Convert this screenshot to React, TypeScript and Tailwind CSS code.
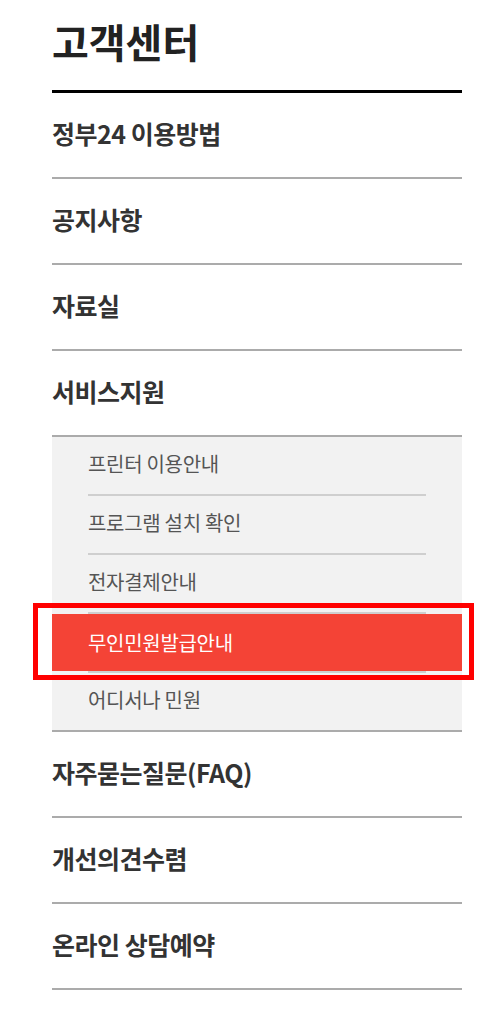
const menu = [
  { label: '정부24 이용방법' },
  { label: '공지사항' },
  { label: '자료실' },
  {
    label: '서비스지원',
    children: ['프린터 이용안내', '프로그램 설치 확인', '전자결제안내', '무인민원발급안내', '어디서나 민원'],
  },
  { label: '자주묻는질문(FAQ)' },
  { label: '개선의견수렴' },
  { label: '온라인 상담예약' },
];

const active = '무인민원발급안내';

export default function App() {
  return (
    <div
      className="relative min-h-[1024px] bg-white"
      style={{ fontFamily: '"Noto Sans CJK KR", "Noto Sans", sans-serif' }}
    >
      <div className="ml-[52px] w-[410px]">
        <div className="h-[93px] border-b-[3px] border-black pt-[15px]">
          <h1 className="text-[40px] font-bold leading-[52px] text-[#222]">고객센터</h1>
        </div>
        <ul>
          {menu.map((item) => (
            <li key={item.label} className="border-b-2 border-[#ababab]">
              <a className="flex h-[84px] items-center pb-[2px] text-[25px] font-bold tracking-[-0.5px] text-[#333]">
                {item.label}
              </a>
              {item.children && (
                <ul className="border-t-2 border-[#ababab] bg-[#f2f2f2]">
                  {item.children.map((sub, i) => (
                    <li key={sub}>
                      <a
                        className={
                          sub === active
                            ? 'flex h-[57px] items-center bg-[#f44336] pl-[36px] text-[20px] tracking-[-0.3px] text-white'
                            : 'flex h-[57px] items-center pb-[4px] pl-[36px] text-[20px] tracking-[-0.3px] text-[#555]'
                        }
                      >
                        {sub}
                      </a>
                      {i < item.children.length - 1 && <div className="mx-[36px] h-[2px] bg-[#cfcfcf]" />}
                    </li>
                  ))}
                </ul>
              )}
            </li>
          ))}
        </ul>
      </div>
      {/* highlight annotation */}
      <div className="pointer-events-none absolute left-[33px] top-[603px] h-[77px] w-[441px] border-[5px] border-[#ff0000]" />
    </div>
  );
}
